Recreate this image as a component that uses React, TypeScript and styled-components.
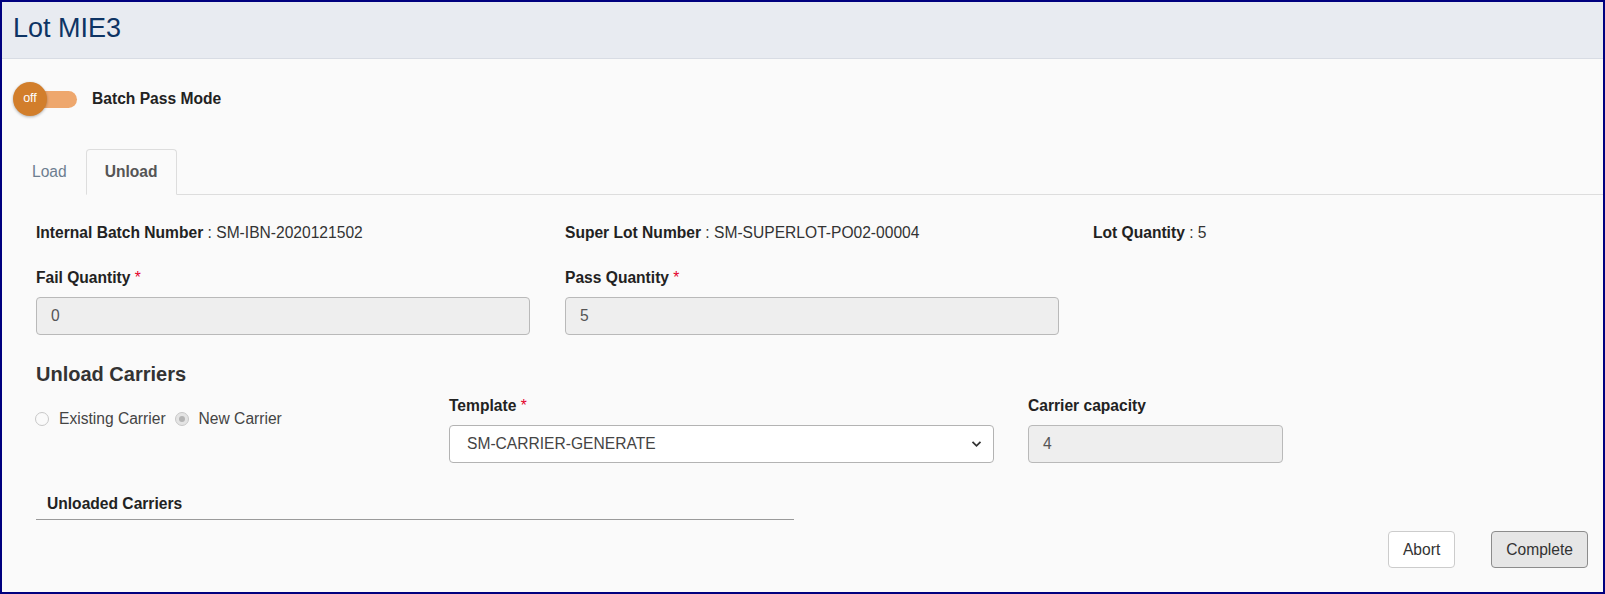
import styled, { createGlobalStyle } from "styled-components";

const GlobalStyle = createGlobalStyle`
  html, body {
    margin: 0;
    padding: 0;
    background: #fafafa;
  }
  body {
    font-family: "Liberation Sans", Arial, sans-serif;
    font-size: 15.6px;
    color: #333;
  }
  * {
    box-sizing: border-box;
  }
`;

const Frame = styled.div`
  width: 100vw;
  height: 100vh;
  border: 2px solid #00007f;
  background: #fafafa;
  display: flex;
  flex-direction: column;
  overflow: hidden;
`;

const Header = styled.div`
  height: 57px;
  flex-shrink: 0;
  background: #e8ebf1;
  border-bottom: 1px solid #d8dce4;
  padding: 13px 11px 0;
  font-size: 27px;
  line-height: 1;
  color: #0e3464;
`;

const ToggleRow = styled.div`
  display: flex;
  align-items: center;
  gap: 15px;
  margin: 23px 0 0 11px;
  height: 34px;
`;

const Toggle = styled.div`
  position: relative;
  width: 64px;
  height: 34px;
`;

const Track = styled.div`
  position: absolute;
  left: 8px;
  top: 9px;
  width: 56px;
  height: 17px;
  border-radius: 9px;
  background: #eea76d;
`;

const Knob = styled.div`
  position: absolute;
  left: 0;
  top: 0;
  width: 34px;
  height: 34px;
  border-radius: 50%;
  background: #d27e2b;
  box-shadow: 0 1px 3px rgba(0, 0, 0, 0.3);
  color: #fff;
  font-size: 12.5px;
  display: flex;
  align-items: center;
  justify-content: center;
  padding-bottom: 2px;
`;

const ToggleLabel = styled.span`
  font-weight: bold;
  color: #222;
`;

const TabBar = styled.div`
  display: flex;
  margin: 33px 0 0 11px;
  height: 46px;
  border-bottom: 1px solid #dddddd;
`;

const Tab = styled.div<{ $active?: boolean }>`
  height: 46px;
  margin-bottom: -1px;
  padding: 0 18px;
  display: flex;
  align-items: center;
  border: 1px solid ${(p) => (p.$active ? "#dddddd" : "transparent")};
  border-bottom-color: ${(p) => (p.$active ? "#fafafa" : "transparent")};
  border-radius: 4px 4px 0 0;
  background: #fafafa;
  color: ${(p) => (p.$active ? "#555" : "#6d7e90")};
  font-weight: ${(p) => (p.$active ? "bold" : "normal")};
`;

const Content = styled.div`
  padding: 0 0 0 34px;
`;

const Grid = styled.div<{ $cols: string; $top: number }>`
  display: grid;
  grid-template-columns: ${(p) => p.$cols};
  margin-top: ${(p) => p.$top}px;
  align-items: start;
`;

const Info = styled.div`
  line-height: 22px;
  color: #333;
  white-space: nowrap;
`;

const Strong = styled.span`
  font-weight: bold;
  color: #222;
`;

const Field = styled.div`
  display: flex;
  flex-direction: column;
  gap: 8px;
`;

const Label = styled.div`
  font-weight: bold;
  color: #222;
  line-height: 22px;
`;

const Req = styled.span`
  color: #e4002b;
  font-weight: normal;
`;

const ReadOnlyInput = styled.div<{ $width: number }>`
  width: ${(p) => p.$width}px;
  height: 38px;
  border: 1px solid #b9b9b9;
  border-radius: 4px;
  background: #eeeeee;
  padding: 0 14px;
  display: flex;
  align-items: center;
  color: #555;
`;

const SelectBox = styled.div`
  width: 545px;
  height: 38px;
  border: 1px solid #b3b3b3;
  border-radius: 4px;
  background: #fff;
  padding: 0 11px 0 17px;
  display: flex;
  align-items: center;
  justify-content: space-between;
  color: #444;
`;

const Heading = styled.div`
  margin-top: 26px;
  font-size: 20px;
  line-height: 26px;
  font-weight: bold;
  color: #333;
`;

const RadioGroup = styled.div`
  display: flex;
  align-items: center;
  margin-top: 13px;
  margin-left: -1px;
  line-height: 22px;
  color: #444;
`;

const RadioOption = styled.label`
  display: flex;
  align-items: center;
  gap: 10px;
  margin-right: 9px;
`;

const RadioDot = styled.span<{ $checked?: boolean }>`
  width: 14px;
  height: 14px;
  border-radius: 50%;
  border: 1px solid #c8c8c8;
  background: ${(p) => (p.$checked ? "#e4e4e4" : "#fafafa")};
  display: flex;
  align-items: center;
  justify-content: center;

  &::after {
    content: "";
    display: ${(p) => (p.$checked ? "block" : "none")};
    width: 6px;
    height: 6px;
    border-radius: 50%;
    background: #b4b4b4;
  }
`;

const Unloaded = styled.div`
  width: 758px;
  margin: 30px 0 0 0;
  padding: 0 0 4px 11px;
  border-bottom: 1px solid #9a9a9a;
  font-weight: bold;
  line-height: 22px;
  color: #222;
`;

const Actions = styled.div`
  display: flex;
  justify-content: flex-end;
  gap: 36px;
  margin-top: 11px;
  padding-right: 15px;
`;

const Button = styled.button<{ $primary?: boolean }>`
  height: 37px;
  padding: 0 14px;
  border-radius: 4px;
  border: 1px solid ${(p) => (p.$primary ? "#8c8c8c" : "#cccccc")};
  background: ${(p) => (p.$primary ? "#e6e6e6" : "#ffffff")};
  color: #333;
  font-family: "Liberation Sans", Arial, sans-serif;
  font-size: 15.6px;
`;

const Chevron = () => (
  <svg width="11" height="8" viewBox="0 0 11 8">
    <path d="M1.5 1.8 L5.5 5.8 L9.5 1.8" fill="none" stroke="#333" strokeWidth="1.8" />
  </svg>
);

export default function App() {
  return (
    <>
      <GlobalStyle />
      <Frame>
        <Header>Lot MIE3</Header>

        <ToggleRow>
          <Toggle>
            <Track />
            <Knob>off</Knob>
          </Toggle>
          <ToggleLabel>Batch Pass Mode</ToggleLabel>
        </ToggleRow>

        <TabBar>
          <Tab>Load</Tab>
          <Tab $active>Unload</Tab>
        </TabBar>

        <Content>
          <Grid $cols="529px 528px 494px" $top={27}>
            <Info>
              <Strong>Internal Batch Number</Strong> : SM-IBN-2020121502
            </Info>
            <Info>
              <Strong>Super Lot Number</Strong> : SM-SUPERLOT-PO02-00004
            </Info>
            <Info>
              <Strong>Lot Quantity</Strong> : 5
            </Info>
          </Grid>

          <Grid $cols="529px 528px 494px" $top={23}>
            <Field>
              <Label>
                Fail Quantity <Req>*</Req>
              </Label>
              <ReadOnlyInput $width={494}>0</ReadOnlyInput>
            </Field>
            <Field>
              <Label>
                Pass Quantity <Req>*</Req>
              </Label>
              <ReadOnlyInput $width={494}>5</ReadOnlyInput>
            </Field>
          </Grid>

          <Heading>Unload Carriers</Heading>

          <Grid $cols="413px 579px 255px" $top={8}>
            <RadioGroup>
              <RadioOption>
                <RadioDot />
                Existing Carrier
              </RadioOption>
              <RadioOption>
                <RadioDot $checked />
                New Carrier
              </RadioOption>
            </RadioGroup>
            <Field>
              <Label>
                Template <Req>*</Req>
              </Label>
              <SelectBox>
                SM-CARRIER-GENERATE
                <Chevron />
              </SelectBox>
            </Field>
            <Field>
              <Label>Carrier capacity</Label>
              <ReadOnlyInput $width={255}>4</ReadOnlyInput>
            </Field>
          </Grid>

          <Unloaded>Unloaded Carriers</Unloaded>
        </Content>

        <Actions>
          <Button>Abort</Button>
          <Button $primary>Complete</Button>
        </Actions>
      </Frame>
    </>
  );
}
